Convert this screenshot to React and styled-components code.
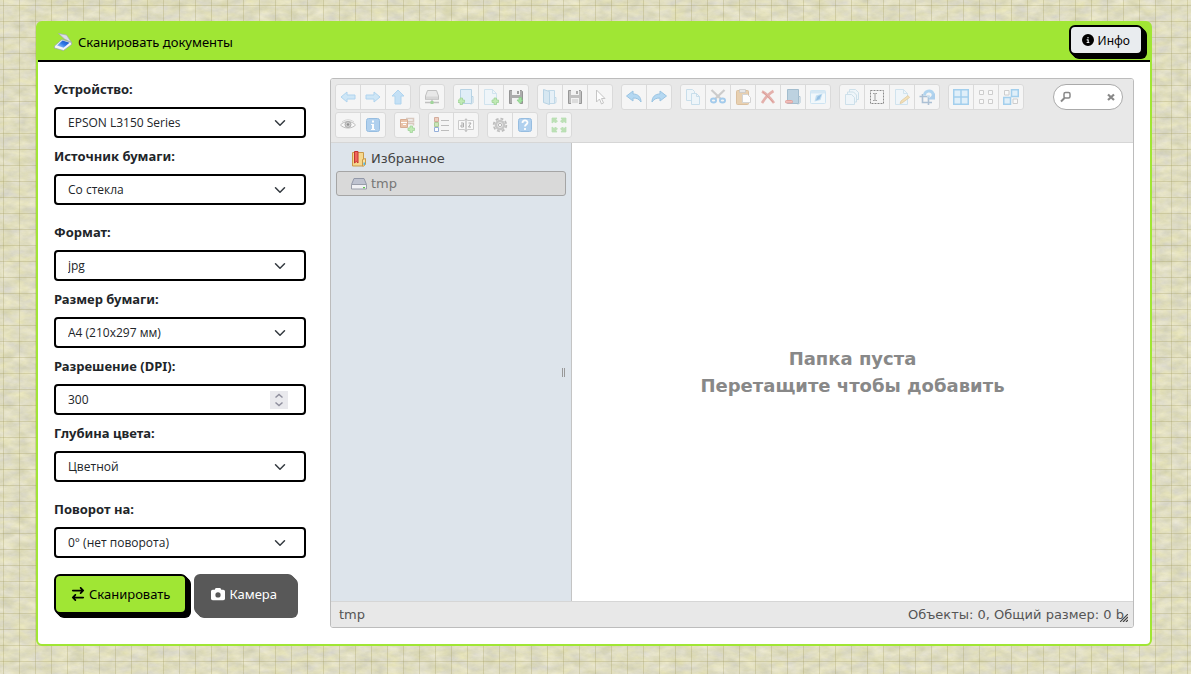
import React from "react";
import styled, { createGlobalStyle } from "styled-components";
import { FaArrowRightArrowLeft, FaCamera, FaCircleInfo } from "react-icons/fa6";

const GlobalStyle = createGlobalStyle`
  *, *::before, *::after { box-sizing: border-box; }
  body {
    margin: 0;
    background: #dddbc0;
    color: #212529;
    font-family: "Noto Sans", "Open Sans", sans-serif;
    font-size: 13px;
  }
  button, input, select { font: inherit; color: inherit; }
`;

const Backdrop = styled.svg`
  position: fixed;
  inset: 0;
  width: 100%;
  height: 100%;
  z-index: -1;
`;

const Page = styled.main`
  padding: 21px 39px 28px 36px;
`;

const Card = styled.section`
  background: #fff;
  border: 2px solid #a0e634;
  border-radius: 6px;
`;

const CardHeader = styled.header`
  display: flex;
  align-items: center;
  justify-content: space-between;
  height: 39px;
  padding: 0 7px 0 16px;
  background: #a0e634;
  border-bottom: 2px solid #000;
`;

const Title = styled.h1`
  display: flex;
  align-items: center;
  gap: 6px;
  margin: 0;
  font-size: 13px;
  font-weight: 400;
  line-height: 20px;
  color: #000;
`;

const PushButton = styled.button`
  display: inline-flex;
  align-items: center;
  justify-content: center;
  gap: 4px;
  height: ${(p) => (p.$small ? 30 : 40)}px;
  margin-bottom: ${(p) => (p.$small ? 3 : 0)}px;
  padding: 0 ${(p) => (p.$small ? 11 : 15)}px;
  font-size: ${(p) => (p.$small ? 12 : 13)}px;
  white-space: nowrap;
  color: ${(p) => p.$color || "#000"};
  background: ${(p) => p.$bg};
  border: 2px solid ${(p) => p.$edge || "#000"};
  border-radius: 6px;
  box-shadow: ${(p) => {
    const c = p.$edge || "#000";
    return `1px 1px 0 ${c}, 2px 2px 0 ${c}, 3px 3px 0 ${c}, 4px 4px 0 ${c}`;
  }};
`;

const CardBody = styled.div`
  display: grid;
  grid-template-columns: 252px minmax(0, 1fr);
  gap: 24px;
  padding: 16px;
`;

const ScanForm = styled.form`
  display: flex;
  flex-direction: column;
  gap: 16px;
`;

const FieldGroup = styled.div`
  display: flex;
  flex-direction: column;
  gap: 7px;
`;

const Field = styled.div`
  display: flex;
  flex-direction: column;
  gap: 7px;
`;

const Label = styled.label`
  font-weight: 700;
  font-size: 13px;
  line-height: 22px;
`;

const ControlWrap = styled.div`
  display: grid;
  align-items: center;
  > * { grid-area: 1 / 1; }
`;

const controlStyle = `
  width: 100%;
  height: 31px;
  padding: 0 40px 0 12px;
  font-family: "Open Sans", "Noto Sans", sans-serif;
  font-size: 12px;
  background: #fff;
  border: 2px solid #000;
  border-radius: 4px;
  appearance: none;
`;

const Select = styled.select`${controlStyle}`;

const NumberInput = styled.input`
  ${controlStyle}
  appearance: textfield;
  &::-webkit-inner-spin-button { display: none; }
`;

const Chevron = styled.svg`
  justify-self: end;
  margin-right: 20px;
  pointer-events: none;
`;

const Spinner = styled.svg`
  justify-self: end;
  margin-right: 18px;
  background: #e9e9ed;
`;

const Actions = styled.div`
  display: flex;
  gap: 7px;
`;

const Manager = styled.section`
  display: flex;
  flex-direction: column;
  font-family: "DejaVu Sans", sans-serif;
  color: #555;
  background: #fff;
  border: 1px solid #bcbcbc;
  border-radius: 3px;
  overflow: hidden;
`;

const Toolbar = styled.div`
  display: flex;
  align-items: flex-start;
  justify-content: space-between;
  padding: 5px 10px 4px 4px;
  background: #e8e8e8;
  border-bottom: 1px solid #d6d6d6;
`;

const ToolRows = styled.div`
  display: flex;
  flex-direction: column;
  gap: 2px;
`;

const ToolRow = styled.div`
  display: flex;
  gap: 8px;
`;

const ToolGroup = styled.div`
  display: flex;
  background: #f5f5f5;
  border: 1px solid #dadada;
  border-radius: 3px;
`;

const ToolButton = styled.button`
  display: grid;
  place-items: center;
  width: 24px;
  height: 24px;
  padding: 0;
  background: none;
  border: 0;
  & + & { width: 25px; border-left: 1px solid #dadada; }
  svg { opacity: 0.8; }
`;

const SearchBox = styled.div`
  display: flex;
  align-items: center;
  width: 70px;
  height: 26px;
  padding: 0 6px;
  background: #fff;
  border: 1px solid #aaa;
  border-radius: 13px;
`;

const SearchInput = styled.input`
  flex: 1;
  min-width: 0;
  padding: 0;
  font-size: 12px;
  border: 0;
  outline: 0;
  background: none;
`;

const IconButton = styled.button`
  display: grid;
  place-items: center;
  padding: 0;
  border: 0;
  background: none;
`;

const Workzone = styled.div`
  flex: 1;
  display: grid;
  grid-template-columns: 241px minmax(0, 1fr);
  min-height: 458px;
`;

const Sidebar = styled.nav`
  display: grid;
  grid-template-columns: minmax(0, 1fr) auto;
  background: #dde4eb;
  border-right: 1px solid #c4c4c4;
`;

const Tree = styled.div`
  grid-area: 1 / 1 / 2 / 3;
  padding: 3px 5px;
`;

const Place = styled.a`
  display: flex;
  align-items: center;
  gap: 4px;
  height: 25px;
  padding-left: 14px;
  font-size: 13px;
  text-decoration: none;
  color: ${(p) => (p.$active ? "#777" : "#444")};
  background: ${(p) => (p.$active ? "#d9d9d9" : "transparent")};
  border: 1px solid ${(p) => (p.$active ? "#a5a5a5" : "transparent")};
  border-radius: 3px;
`;

const Grip = styled.div`
  grid-area: 1 / 2;
  align-self: center;
  width: 3px;
  height: 9px;
  margin-right: 6px;
  border: solid #999;
  border-width: 0 1px;
`;

const EmptyFolder = styled.div`
  display: flex;
  flex-direction: column;
  align-items: center;
  justify-content: center;
  font-size: 18px;
  font-weight: 700;
  line-height: 27px;
  text-align: center;
  color: #888;
`;

const StatusBar = styled.footer`
  display: flex;
  align-items: center;
  justify-content: space-between;
  height: 26px;
  padding: 0 5px 0 8px;
  font-size: 13px;
  background: #e8e8e8;
  border-top: 1px solid #d6d6d6;
`;

const StatusInfo = styled.span`
  display: flex;
  align-items: center;
`;

const ResizeMark = styled.svg`
  align-self: flex-end;
  margin-left: -4px;
`;

const B = "#9fcdee";
const L = "#dcedf8";
const G = "#a6d8a0";
const plus = (x, y) => (
  <path d={`M${x + 2} ${y}h2.500v2h2v2.500h-2v2h-2.500v-2h-2v-2.500h2z`} fill="#b4e8a6" stroke="#84c87a" strokeWidth=".7" />
);

const ICONS = {
  back: <path d="M1 8l6-5v3h8v4H7v3z" fill="#c5e3f7" stroke={B} />,
  forward: <path d="M15 8L9 3v3H1v4h8v3z" fill="#c5e3f7" stroke={B} />,
  up: <path d="M8 1l6 6h-3v8H5V7H2z" fill="#b8dcf6" stroke={B} />,
  netmount: (
    <>
      <path d="M3.500 1.500h9l2 5.500v3.500h-13V7z" fill="#e6e6e6" stroke="#b4b4b4" />
      <path d="M2 7.500h12v3H2z" fill="#cfcfcf" />
      <path d="M1 13.500h14M8 10.500v3" stroke="#b4b4b4" strokeWidth="1.500" />
      <path d="M6.500 12h3v3h-3z" fill="#8ccf84" />
    </>
  ),
  mkdir: (
    <>
      <path d="M2.500.5h11v14h-11z" fill={L} stroke="#a9cbe0" />
      <path d="M13.500 7.500h1.500v6l-2 2" fill="none" stroke="#a9cbe0" />
      {plus(0, 9)}
    </>
  ),
  mkfile: (
    <>
      <path d="M1.500.5h8l4 4v11h-12z" fill="#eef6fb" stroke="#c8dfed" />
      <path d="M9.500.5v4h4" fill="none" stroke="#c8dfed" />
      {plus(9, 9)}
    </>
  ),
  upload: (
    <>
      <path d="M1.500 1.500h12l1 1v12h-13z" fill="#9a9a9a" stroke="#7c7c7c" />
      <path d="M4 1h8v5H4zM4 9h8v6H4z" fill="#f2f2f2" />
      <path d="M9 2h2v3H9z" fill="#8a8a8a" />
      <path d="M11 8.500h2.500V11H15l-3 3.500L9 11h2z" fill="#8fdc8b" stroke="#6cc46a" strokeWidth=".7" />
    </>
  ),
  open: (
    <>
      <path d="M6.500 1.500h6v13h-6z" fill="#e3f0f8" stroke="#b5d3e6" />
      <path d="M1.500.5l6 2v13l-6-2z" fill="#cfe4f1" stroke="#a9cbe0" />
      <path d="M12.500 8.500h1.500v5l-1.500 1" fill="none" stroke="#b5d3e6" />
    </>
  ),
  download: (
    <>
      <path d="M1.500 1.500h12l1 1v12h-13z" fill="#b4b4b4" stroke="#808080" />
      <path d="M4 1h8v5H4zM4 9h8v6H4z" fill="#f2f2f2" />
      <path d="M9 2h2v3H9z" fill="#999" />
      <path d="M5 11h6M5 13h6" stroke="#bbb" />
    </>
  ),
  getfile: <path d="M4.500 1v12l3-3 2 5 2-1-2-4.500H13z" fill="#fff" stroke="#bbb" />,
  undo: <path d="M.5 7L7 2v3c5 0 8 3 8 8-2-3-4-4-8-4v3z" fill="#a5d2f2" stroke="#84b8de" />,
  redo: <path d="M15.500 7L9 2v3c-5 0-8 3-8 8 2-3 4-4 8-4v3z" fill="#a5d2f2" stroke="#84b8de" />,
  copy: (
    <>
      <path d="M1.500.5h6l2 2v9h-8z" fill="#edf5fa" stroke="#bed9e9" />
      <path d="M6.500 4.500h5l3 3v8h-8z" fill="#edf5fa" stroke="#bed9e9" />
      <path d="M11.500 4.500v3h3" fill="none" stroke="#bed9e9" />
    </>
  ),
  cut: (
    <>
      <path d="M1.500 1l9.500 9M14.500 1L5 10" stroke="#c2c2c2" strokeWidth="2.200" />
      <ellipse cx="3.500" cy="11.500" rx="2.600" ry="2" fill="none" stroke="#8fc1ea" strokeWidth="1.800" />
      <ellipse cx="12.500" cy="11.500" rx="2.600" ry="2" fill="none" stroke="#8fc1ea" strokeWidth="1.800" />
    </>
  ),
  paste: (
    <>
      <rect x="1.500" y="1.500" width="12" height="14" rx="1" fill="#e6c8a0" stroke="#d5b48a" />
      <path d="M4.500.5h6v3h-6z" fill="#e4e4e4" stroke="#bbb" strokeWidth=".7" />
      <path d="M7.500 5.500h5l3 3v5h-8z" fill="#fff" stroke="#ccc" />
    </>
  ),
  remove: (
    <>
      <path d="M2 2.500c4 2 8 6 12 11.500M13.500 2C9 4.500 5 9 2 14" fill="none" stroke="#e0a09a" strokeWidth="2.600" />
      <path d="M3 3l10 10" stroke="#d58982" />
    </>
  ),
  empty: (
    <>
      <path d="M2.500.5h11v14h-11z" fill="#b0cadb" stroke="#8fb0c5" />
      <path d="M13.500 7.500h1.500v6l-2 2" fill="none" stroke="#9bbacd" />
      <rect x=".5" y="11.500" width="7" height="2.500" rx="1" fill="#f0b0ac" stroke="#dc8f8a" />
    </>
  ),
  hide: (
    <>
      <rect x=".5" y="1.500" width="15" height="13" rx="1" fill="#f2f9fd" stroke="#c5e1f2" />
      <path d="M1 3h14" stroke="#cfe6f4" strokeWidth="3" />
      <path d="M12.500 4.500l-2 6.500-6 1.500 1.500-6z" fill="#b5d8f0" />
      <path d="M11.500 5.500L9.500 10 6 11.500l1.500-4z" fill="#7fb4e0" />
    </>
  ),
  duplicate: (
    <>
      <path d="M5.500.5h6l3 3v7h-9z" fill="#eef6fa" stroke="#c4dbe8" />
      <path d="M3.500 3h6l3 3v7h-9z" fill="#eef6fa" stroke="#c4dbe8" />
      <path d="M1.500 5.500h6l3 3v7h-9z" fill="#eef6fa" stroke="#c4dbe8" />
    </>
  ),
  rename: (
    <>
      <rect x="1.500" y="1.500" width="13" height="13" fill="none" stroke="#707070" strokeDasharray="2 1" />
      <path d="M4 4.500h1.500l.5.5.5-.5H8M6 5v6M4 11.500h1.500L6 11l.5.5H8" fill="none" stroke="#8a8a8a" />
    </>
  ),
  edit: (
    <>
      <path d="M1.500.5h8l4 4v11h-12z" fill="#eef6fb" stroke="#c8dfed" />
      <path d="M9.500.5v4h4" fill="none" stroke="#c8dfed" />
      <path d="M6 14.500l1-2.500L14 6.500l1.500 2L8 14z" fill="#f4dca8" stroke="#d9bb86" strokeWidth=".7" />
    </>
  ),
  resize: (
    <>
      <path d="M3.500 5v8.500H13M.5 7.500h9V16" fill="none" stroke="#9bb4cc" strokeWidth="1.600" />
      <path d="M5.500 6.500A4.500 4.500 0 0 1 14 4.500V8" fill="none" stroke={B} strokeWidth="2.800" />
      <path d="M8.500 10.500H16V4z" fill="#9cc6ea" />
      <path d="M8 7.500h3" stroke="#bcdaf0" strokeWidth="2" />
    </>
  ),
  selectAll: (
    <path d="M.75.75h7.250v7.250H.75zM8 .75h7.250v7.250H8zM.75 8h7.250v7.250H.75zM8 8h7.250v7.250H8z" fill="#dceefa" stroke="#8fc6ec" strokeWidth="1.500" />
  ),
  selectNone: (
    <path d="M1.500 1.500h4v4h-4zM10.500 1.500h4v4h-4zM1.500 10.500h4v4h-4zM10.500 10.500h4v4h-4z" fill="#fafafa" stroke="#c4c4c4" />
  ),
  selectInvert: (
    <>
      <path d="M1.500 1.500h4.500v4.500H1.500zM10 10h4.500v4.500H10z" fill="#fafafa" stroke="#c4c4c4" />
      <path d="M8.500.75h6.750v6.750H8.500zM.75 8.500h6.750v6.750H.75z" fill="#dceefa" stroke="#8fc6ec" strokeWidth="1.500" />
    </>
  ),
  quicklook: (
    <>
      <path d="M.5 8C4 3.500 12 3.500 15.500 8 12 12 4 12 .5 8z" fill="#fafafa" stroke="#b0b0b0" />
      <path d="M2 5c4-3 8-3 12 0" fill="none" stroke="#ccc" />
      <circle cx="8" cy="7.500" r="3" fill="#c9c9c9" stroke="#9c9c9c" />
      <circle cx="8" cy="7.500" r="1.300" fill="#777" />
    </>
  ),
  info: (
    <>
      <rect x="1.500" y="1.500" width="13" height="13" rx="2" fill="#a0c8ed" stroke="#80b0dc" />
      <path d="M7 3.500h2v2H7zM6 7h3v5h1v1H6v-1h1V8H6z" fill="#fff" />
    </>
  ),
  extract: (
    <>
      <path d="M1.500 2.500h7v8h-7z" fill="#e8b898" stroke="#d09c7c" />
      <path d="M2 5.500h6M4 7.500h3" stroke="#fff" />
      <path d="M7 1.500h7.500v3H9M9 6.500h5.500v2" fill="none" stroke="#d3bfb2" strokeWidth="1.500" />
      {plus(9, 9)}
    </>
  ),
  view: (
    <>
      <path d="M1.500.5h4v4h-4z" fill="#edc6b4" stroke="#cb9a87" />
      <path d="M1.500 5.500h4v4h-4z" fill="#c3e2ac" stroke="#9cc283" />
      <path d="M1.500 10.500h4v4h-4z" fill="#fff" stroke="#7d9dd3" />
      <path d="M8 3.500h8M8 8.500h8M8 13.500h8" stroke="#b0b0b0" />
    </>
  ),
  sort: (
    <>
      <path d="M.5 3.500h6l1.500-2 1.500 2h6v9h-6l-1.500 2.500-1.500-2.500h-6z" fill="#fafafa" stroke="#c0c0c0" />
      <path d="M3 6h2.500v4H3V8h2.500M8 2v12M10.500 6H13l-2.500 4H13" fill="none" stroke="#9c9c9c" />
    </>
  ),
  preference: (
    <>
      <circle cx="8" cy="8" r="6.300" fill="none" stroke="#b0b0b0" strokeWidth="1.800" strokeDasharray="2.900 2" />
      <circle cx="8" cy="8" r="4" fill="#eee" stroke="#bcbcbc" strokeWidth="2.600" />
      <circle cx="8" cy="8" r="1.700" fill="#f5f5f5" stroke="#aaa" />
    </>
  ),
  help: (
    <>
      <rect x="1.500" y="1.500" width="13" height="13" rx="2" fill="#a0c8ed" stroke="#80b0dc" />
      <path d="M5.500 6c0-3.300 5-3.300 5-.5C10.500 7.500 8 7.500 8 9.500M8 11v2" fill="none" stroke="#fff" strokeWidth="1.800" />
    </>
  ),
  fullscreen: (
    <path d="M1 1h5L4.800 2.500 6.500 4 4.500 6 3 4.500 1 6zM15 1h-5l1.200 1.500L9.500 4l2 2L13 4.500 15 6zM1 15h5l-1.200-1.500L6.500 12l-2-2L3 11.500 1 10zM15 15h-5l1.200-1.500L9.500 12l2-2 1.500 1.500 2-1.500z" fill="#b0dca6" stroke={G} strokeWidth=".7" />
  ),
};

const TOOLS = [
  [
    [["back", "Назад"], ["forward", "Вперед"], ["up", "Вверх"]],
    [["netmount", "Подключить сетевой диск"]],
    [["mkdir", "Новая папка"], ["mkfile", "Новый файл"], ["upload", "Загрузить файлы"]],
    [["open", "Открыть"], ["download", "Скачать"], ["getfile", "Выбрать"]],
    [["undo", "Отменить"], ["redo", "Повторить"]],
    [["copy", "Копировать"], ["cut", "Вырезать"], ["paste", "Вставить"], ["remove", "Удалить"], ["empty", "Очистить"], ["hide", "Скрыть"]],
    [["duplicate", "Дублировать"], ["rename", "Переименовать"], ["edit", "Редактировать"], ["resize", "Изменить размер"]],
    [["selectAll", "Выбрать все"], ["selectNone", "Снять выбор"], ["selectInvert", "Инвертировать выбор"]],
  ],
  [
    [["quicklook", "Просмотр"], ["info", "Свойства"]],
    [["extract", "Архив"]],
    [["view", "Вид"], ["sort", "Сортировка"]],
    [["preference", "Настройки"], ["help", "Помощь"]],
    [["fullscreen", "На весь экран"]],
  ],
];

const FIELD_GROUPS = [
  [
    { id: "device", label: "Устройство:", value: "EPSON L3150 Series" },
    { id: "source", label: "Источник бумаги:", value: "Со стекла" },
  ],
  [
    { id: "format", label: "Формат:", value: "jpg" },
    { id: "size", label: "Размер бумаги:", value: "A4 (210x297 мм)" },
    { id: "dpi", label: "Разрешение (DPI):", value: 300, number: true },
    { id: "depth", label: "Глубина цвета:", value: "Цветной" },
  ],
  [{ id: "rotate", label: "Поворот на:", value: "0° (нет поворота)" }],
];

function PaperBackdrop() {
  return (
    <Backdrop aria-hidden="true">
      <defs>
        <filter id="fibres" x="0" y="0" width="100%" height="100%" colorInterpolationFilters="sRGB">
          <feTurbulence type="fractalNoise" baseFrequency=".07 .14" numOctaves="5" seed="8" />
          <feColorMatrix values=".14 .03 0 0 .79  .13 .03 0 0 .785  .06 .16 0 0 .645  0 0 0 0 1" />
        </filter>
        <pattern id="squares" x="3" y="5" width="16" height="16" patternUnits="userSpaceOnUse">
          <path d="M.5 0v16M0 .5h16" stroke="#a39c62" strokeOpacity=".3" />
        </pattern>
      </defs>
      <rect width="100%" height="100%" filter="url(#fibres)" />
      <rect width="100%" height="100%" fill="url(#squares)" />
    </Backdrop>
  );
}

function ScannerIcon() {
  return (
    <svg width="18" height="18" viewBox="0 0 18 18" aria-hidden="true">
      <defs>
        <linearGradient id="glass" x1="0" y1="1" x2="1" y2="0">
          <stop offset="0" stopColor="#b9dcff" />
          <stop offset=".5" stopColor="#2f7ae8" />
          <stop offset="1" stopColor="#1747b8" />
        </linearGradient>
      </defs>
      <path d="M4.500.5l8 1.500L17.500 9.500l-7-3.500z" fill="#dcdfe8" stroke="#a5abba" strokeWidth=".7" />
      <path d="M.5 13L8 6.500l9.500 3v2L9.500 17.500.5 15z" fill="#f2f4f8" stroke="#98a1b5" strokeWidth=".7" />
      <path d="M3 12.500L8.500 7.500l7 2.300-6 5z" fill="url(#glass)" />
    </svg>
  );
}

function FormField({ id, label, value, number }) {
  return (
    <Field>
      <Label htmlFor={id}>{label}</Label>
      <ControlWrap>
        {number ? (
          <>
            <NumberInput id={id} type="number" defaultValue={value} />
            <Spinner width="18" height="18" viewBox="0 0 18 18" aria-hidden="true">
              <path d="M5.500 6.500L9 3.500l3.500 3M5.500 11.500l3.500 3 3.500-3" fill="none" stroke="#8f8f9d" strokeWidth="1.500" />
            </Spinner>
          </>
        ) : (
          <>
            <Select id={id}>
              <option>{value}</option>
            </Select>
            <Chevron width="12" height="12" viewBox="0 0 16 16" aria-hidden="true">
              <path d="M2 5l6 6 6-6" fill="none" stroke="#343a40" strokeWidth="2" strokeLinecap="round" strokeLinejoin="round" />
            </Chevron>
          </>
        )}
      </ControlWrap>
    </Field>
  );
}

function FileManager() {
  return (
    <Manager>
      <Toolbar>
        <ToolRows>
          {TOOLS.map((row, r) => (
            <ToolRow key={r}>
              {row.map((group) => (
                <ToolGroup key={group[0][0]}>
                  {group.map(([name, title]) => (
                    <ToolButton key={name} type="button" title={title} aria-label={title}>
                      <svg width="16" height="16" viewBox="0 0 16 16">{ICONS[name]}</svg>
                    </ToolButton>
                  ))}
                </ToolGroup>
              ))}
            </ToolRow>
          ))}
        </ToolRows>
        <SearchBox>
          <svg width="12" height="12" viewBox="0 0 12 12" aria-hidden="true">
            <rect x="4" y="1.500" width="6" height="5.500" rx="1.500" fill="none" stroke="#888" strokeWidth="1.500" />
            <path d="M4.500 7L1 10.500" stroke="#888" strokeWidth="2" />
          </svg>
          <SearchInput type="text" aria-label="Поиск" />
          <IconButton type="button" aria-label="Очистить поиск">
            <svg width="10" height="10" viewBox="0 0 10 10">
              <path d="M2 2.500l6 5.500M8 2.500L2 8" stroke="#888" strokeWidth="2.200" />
            </svg>
          </IconButton>
        </SearchBox>
      </Toolbar>
      <Workzone>
        <Sidebar>
          <Tree>
            <Place href="#favorites">
              <svg width="16" height="16" viewBox="0 0 16 16" aria-hidden="true">
                <path d="M1.500 1.500h11V15h-11z" fill="#f6d88e" stroke="#c99a4a" />
                <path d="M11.500 8.500l3-1v6l-2 1.500h-1z" fill="#f9e3a6" stroke="#c99a4a" />
                <path d="M3.500.5h3.500v11.500l-1.700-1.500-1.800 1.500z" fill="#f0645c" stroke="#c03430" />
                <path d="M12.500 11.500H14v2.500h-1.500z" fill="#4ab4ea" />
              </svg>
              Избранное
            </Place>
            <Place href="#tmp" $active>
              <svg width="16" height="16" viewBox="0 0 16 16" aria-hidden="true">
                <path d="M3 2.500h10l2.500 6h-15z" fill="#bfc3d0" stroke="#9298a8" />
                <path d="M.5 8.500h15v4.500h-15z" fill="#f1f1f4" stroke="#9a9eaa" />
                <path d="M12 11h2v1.200h-2z" fill="#5cc84a" />
              </svg>
              tmp
            </Place>
          </Tree>
          <Grip />
        </Sidebar>
        <EmptyFolder>
          <span>Папка пуста</span>
          <span>Перетащите чтобы добавить</span>
        </EmptyFolder>
      </Workzone>
      <StatusBar>
        <span>tmp</span>
        <StatusInfo>
          Объекты: 0, Общий размер: 0 b
          <ResizeMark width="8" height="8" viewBox="0 0 8 8" aria-hidden="true">
            <path d="M0 8l8-8M3 8l5-5M6 8l2-2" stroke="#444" strokeWidth="1.200" />
          </ResizeMark>
        </StatusInfo>
      </StatusBar>
    </Manager>
  );
}

export default function App() {
  return (
    <>
      <GlobalStyle />
      <PaperBackdrop />
      <Page>
        <Card>
          <CardHeader>
            <Title>
              <ScannerIcon />
              Сканировать документы
            </Title>
            <PushButton type="button" $small $bg="#e9ecef">
              <FaCircleInfo size={12} />
              Инфо
            </PushButton>
          </CardHeader>
          <CardBody>
            <ScanForm onSubmit={(e) => e.preventDefault()}>
              {FIELD_GROUPS.map((group) => (
                <FieldGroup key={group[0].id}>
                  {group.map((field) => (
                    <FormField key={field.id} {...field} />
                  ))}
                </FieldGroup>
              ))}
              <Actions>
                <PushButton type="submit" $bg="#a0e634">
                  <FaArrowRightArrowLeft size={14} />
                  Сканировать
                </PushButton>
                <PushButton type="button" $bg="#585858" $edge="#585858" $color="#fff">
                  <FaCamera size={14} />
                  Камера
                </PushButton>
              </Actions>
            </ScanForm>
            <FileManager />
          </CardBody>
        </Card>
      </Page>
    </>
  );
}
